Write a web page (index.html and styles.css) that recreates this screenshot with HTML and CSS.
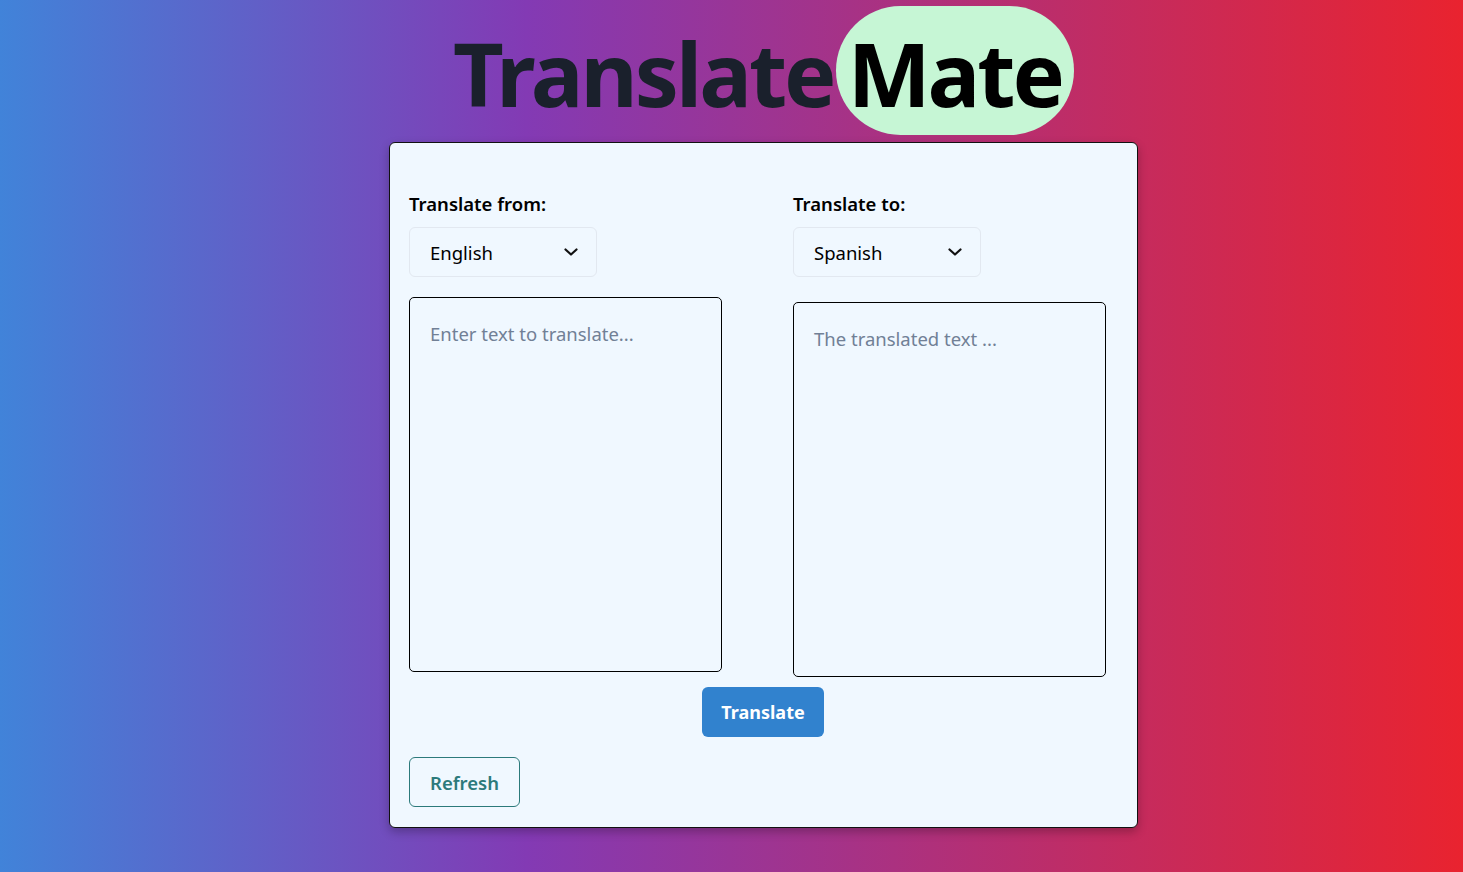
FILE: index.html
```html
<!DOCTYPE html>
<html lang="en">
<head>
<meta charset="utf-8">
<title>TranslateMate</title>
<link rel="stylesheet" href="styles.css">
</head>
<body>
<div class="page">
  <h1 class="title"><span class="title-main">Translate</span><span class="title-mate">Mate</span></h1>
  <main class="card">
    <div class="columns">
      <div class="col">
        <label class="label">Translate from:</label>
        <div class="select">
          <span>English</span>
          <svg class="chev" width="14" height="8" viewBox="0 0 14 8"><path d="M1.5 1.5 L7 6.5 L12.5 1.5" fill="none" stroke="#111" stroke-width="2.2" stroke-linecap="round" stroke-linejoin="round"/></svg>
        </div>
        <textarea class="text text-from" placeholder="Enter text to translate..."></textarea>
      </div>
      <div class="col">
        <label class="label">Translate to:</label>
        <div class="select">
          <span>Spanish</span>
          <svg class="chev" width="14" height="8" viewBox="0 0 14 8"><path d="M1.5 1.5 L7 6.5 L12.5 1.5" fill="none" stroke="#111" stroke-width="2.2" stroke-linecap="round" stroke-linejoin="round"/></svg>
        </div>
        <textarea class="text text-to" placeholder="The translated text ..." readonly></textarea>
      </div>
    </div>
    <div class="actions">
      <button class="btn-primary" type="button">Translate</button>
    </div>
    <div class="refresh-row">
      <button class="btn-outline" type="button">Refresh</button>
    </div>
  </main>
</div>
</body>
</html>
```

FILE: styles.css
```css
* { box-sizing: border-box; }

html, body {
  margin: 0;
  height: 100%;
}

body {
  font-family: "Noto Sans", "Open Sans", sans-serif;
  background: linear-gradient(90deg, #4183d9 0%, #833ab4 36%, #e9232f 100%);
  color: #000;
  overflow: hidden;
}

.page {
  display: flex;
  flex-direction: column;
  align-items: center;
  padding-left: 64px;
  padding-top: 6px;
}

.title {
  margin: 0;
  display: flex;
  font-size: 88px;
  font-weight: 700;
  letter-spacing: -3px;
  height: 129px;
}

.title-main {
  color: #1a202c;
  display: block;
  height: 129px;
  padding-top: 6px;
  line-height: 123px;
  margin-right: 2px;
}

.title-mate {
  display: block;
  color: #000;
  background: #c6f6d5;
  border-radius: 9999px;
  padding: 6px 12px 0 12px;
  height: 129px;
  line-height: 123px;
}

.card {
  margin-top: 7px;
  width: 749px;
  background: #f0f8ff;
  border: 1px solid #111;
  border-radius: 6px;
  padding: 47px 20px 20px 19px;
  box-shadow: 0 4px 10px rgba(0, 0, 0, 0.25);
}

.columns {
  display: flex;
  gap: 71px;
}

.col {
  width: 313px;
  display: flex;
  flex-direction: column;
  align-items: flex-start;
}

.label {
  font-size: 18.5px;
  font-weight: 600;
  line-height: 27px;
  margin-bottom: 10px;
}

.select {
  width: 188px;
  height: 50px;
  border: 1px solid #e2e8f0;
  border-radius: 6px;
  display: flex;
  align-items: center;
  justify-content: space-between;
  padding: 0 18px 0 20px;
  font-size: 18.5px;
}

.chev {
  display: block;
}

.text {
  width: 313px;
  height: 375px;
  border: 1px solid #000;
  border-radius: 5px;
  background: #f0f8ff;
  padding: 20px;
  font-family: "Noto Sans", "Open Sans", sans-serif;
  font-size: 18.5px;
  line-height: 32px;
  resize: none;
  outline: none;
  color: #1a202c;
}

.text::placeholder {
  color: #718096;
}

.text-from { margin-top: 20px; }
.text-to { margin-top: 25px; }

.actions {
  display: flex;
  justify-content: center;
  margin-top: 10px;
}

.btn-primary {
  height: 50px;
  padding: 0 19px;
  background: #3182ce;
  color: #fff;
  border: none;
  border-radius: 6px;
  font-family: "Noto Sans", "Open Sans", sans-serif;
  font-size: 18px;
  font-weight: 700;
}

.refresh-row {
  margin-top: 20px;
  display: flex;
}

.btn-outline {
  height: 50px;
  padding: 0 20px;
  background: transparent;
  color: #2c7a7b;
  border: 1px solid #2c7a7b;
  border-radius: 6px;
  font-family: "Noto Sans", "Open Sans", sans-serif;
  font-size: 18.5px;
  font-weight: 600;
}
```
